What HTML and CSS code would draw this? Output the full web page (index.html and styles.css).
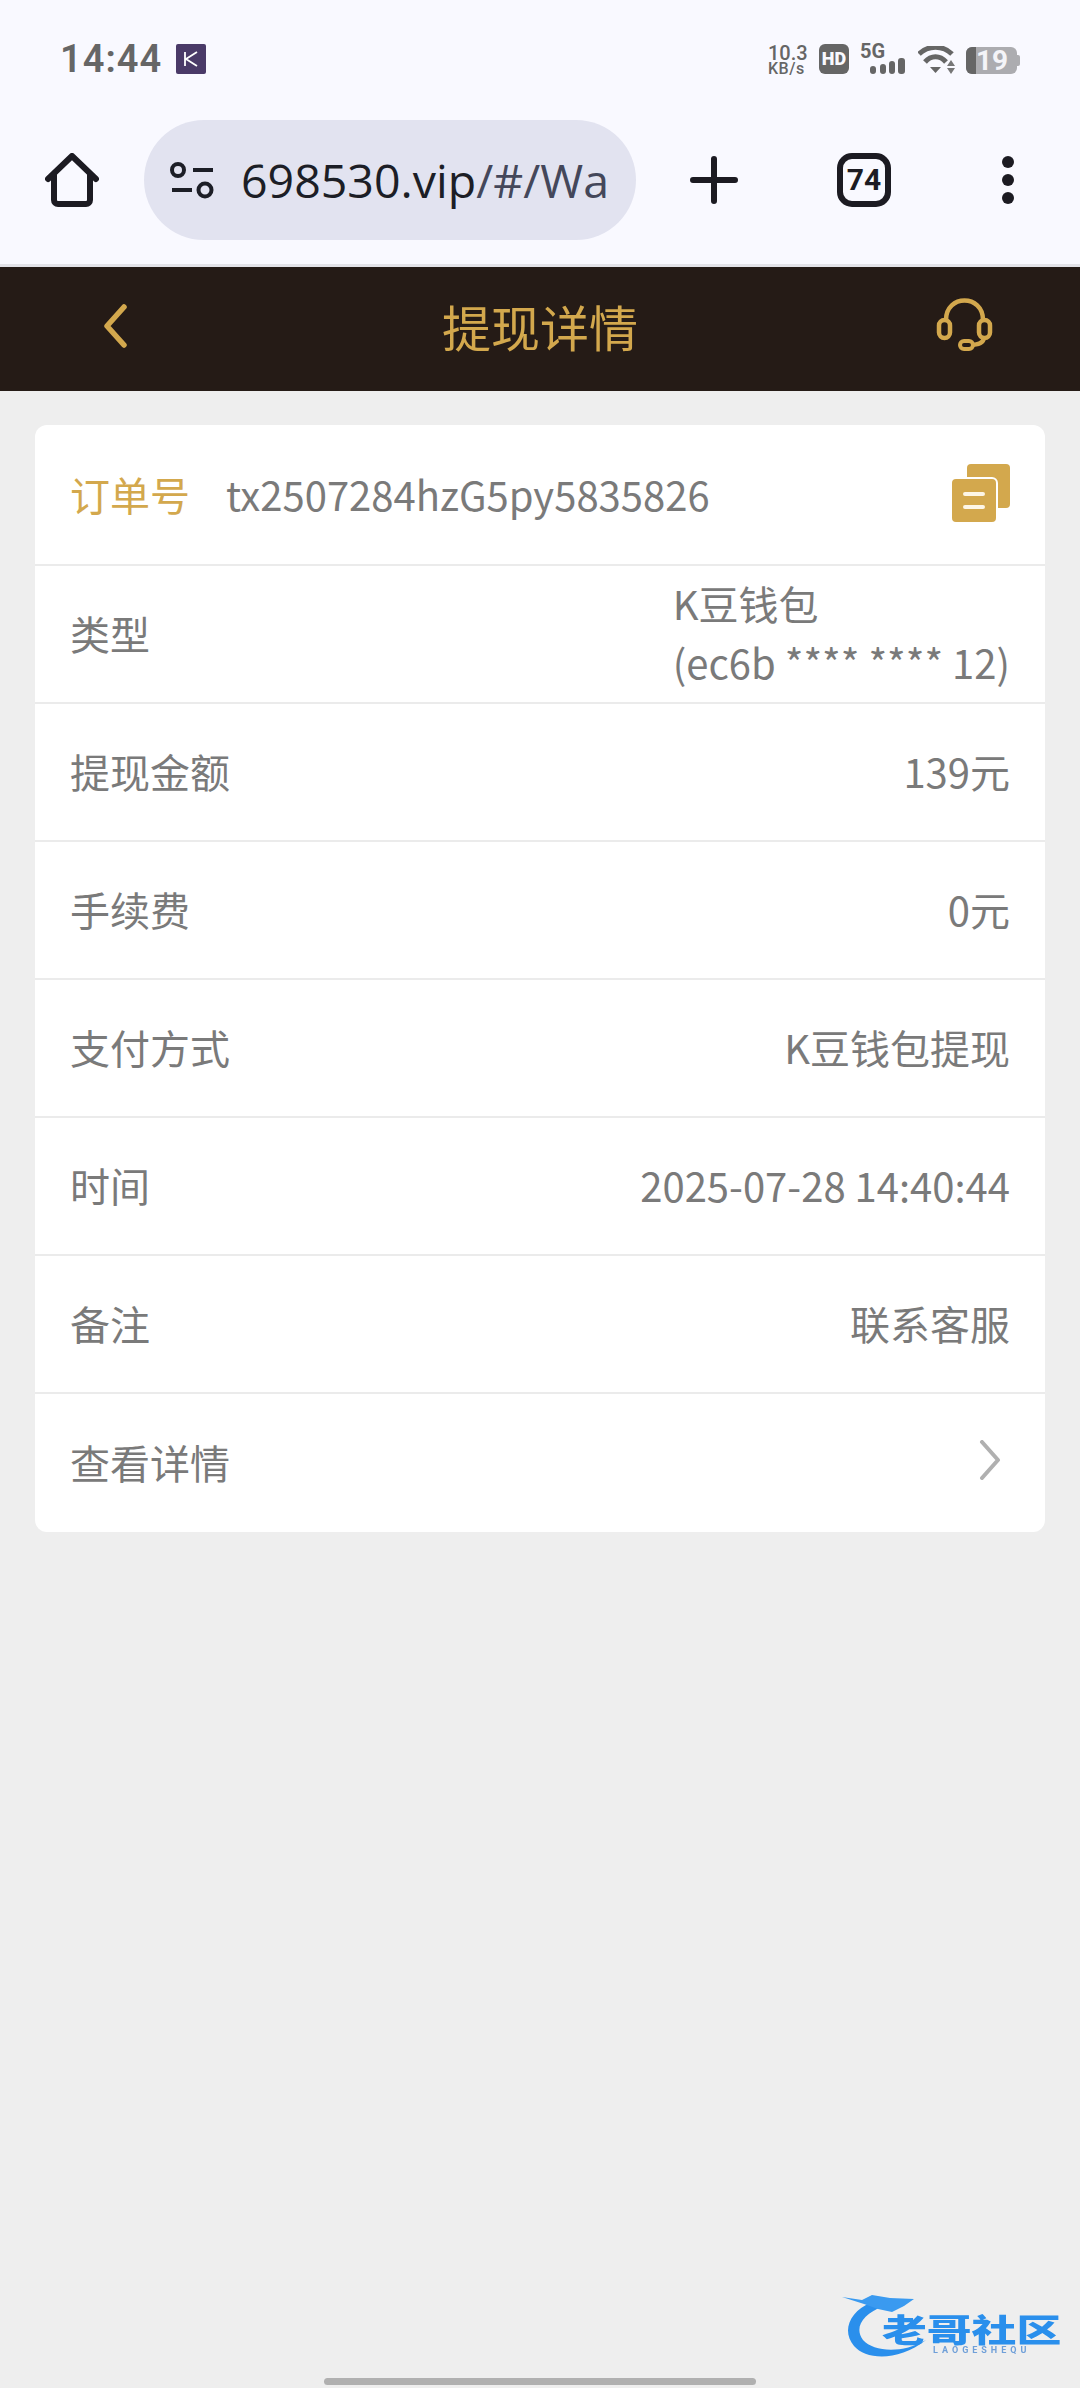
FILE: index.html
```html
<!DOCTYPE html>
<html>
<head>
    <title>提现详情</title>
    <link rel="stylesheet" href="styles.css">
    <meta charset="UTF-8">
    <meta name="viewport" content="width=device-width, initial-scale=1.0">
</head>
<body>
<div class="page">
    <div class="statusbar">
        <span class="clock">14:44</span>
        <svg class="app-icon" width="30" height="30" viewBox="0 0 30 30">
            <rect width="30" height="30" rx="2" fill="#4a3a68"/>
            <path d="M9 8v14M21 8l-11 7 11 7" fill="none" stroke="#fff" stroke-width="1.8"/>
        </svg>
        <div class="status-right">
            <div class="speed"><span class="speed-num">10.3</span><span class="speed-unit">KB/s</span></div>
            <div class="hd">HD</div>
            <div class="net">
                <span class="net-label">5G</span>
                <svg class="net-bars" width="35" height="16" viewBox="0 0 35 16">
                    <rect x="0" y="8" width="6" height="8" rx="3" fill="#666"/>
                    <rect x="10" y="6" width="6" height="10" rx="3" fill="#666"/>
                    <rect x="19" y="3" width="6" height="13" rx="3" fill="#666"/>
                    <rect x="28" y="0" width="7" height="16" rx="3" fill="#666"/>
                </svg>
            </div>
            <svg class="wifi" width="37" height="28" viewBox="0 0 37 28">
                <path d="M1 8C10 -1 25 -1 34 8" fill="none" stroke="#666" stroke-width="5"/>
                <path d="M7 16C13 9 22 9 28 16" fill="none" stroke="#666" stroke-width="5"/>
                <path d="M12 21h11l-5.500 6z" fill="#666"/>
                <path d="M33 14l4 6h-8zM29 22h8l-4 6z" fill="#777"/>
            </svg>
            <div class="battery">
                <div class="battery-fill"></div>
                <span class="battery-num">19</span>
            </div>
        </div>
    </div>

    <div class="toolbar">
        <svg class="home" width="54" height="54" viewBox="0 0 54 54">
            <path d="M3 26L27 3L51 26M9 21V47a4 4 0 0 0 4 4H41a4 4 0 0 0 4-4V21" fill="none" stroke="#1c1b22" stroke-width="6" stroke-linecap="round" stroke-linejoin="round"/>
        </svg>
        <div class="urlbar">
            <svg class="tune" width="44" height="38" viewBox="0 0 44 38">
                <circle cx="8" cy="9" r="6" fill="none" stroke="#1c1e26" stroke-width="4"/>
                <path d="M23 9H43M2 29H22" stroke="#1c1e26" stroke-width="4"/>
                <circle cx="35" cy="29" r="6.500" fill="none" stroke="#1c1e26" stroke-width="4"/>
            </svg>
            <span class="url">698530.vip<span class="url-path">/#/Wa</span></span>
        </div>
        <svg class="plus" width="48" height="48" viewBox="0 0 48 48">
            <path d="M24 3V45M3 24H45" stroke="#1c1b22" stroke-width="6" stroke-linecap="round"/>
        </svg>
        <div class="tabs">74</div>
        <svg class="more" width="12" height="48" viewBox="0 0 12 48">
            <circle cx="6" cy="6" r="6" fill="#1c1b22"/>
            <circle cx="6" cy="24" r="6" fill="#1c1b22"/>
            <circle cx="6" cy="42" r="6" fill="#1c1b22"/>
        </svg>
    </div>

    <div class="header">
        <svg class="back" width="24" height="44" viewBox="0 0 24 44">
            <path d="M20 3L3 22L20 41" fill="none" stroke="#d3a84d" stroke-width="5.500" stroke-linecap="round" stroke-linejoin="round"/>
        </svg>
        <div class="title">提现详情</div>
        <svg class="support" width="57" height="53" viewBox="0 0 57 53">
            <path d="M10 22C10 -4 47 -4 47 22" fill="none" stroke="#d3a84d" stroke-width="4.500"/>
            <rect x="3" y="22" width="11" height="18" rx="5.500" fill="none" stroke="#d3a84d" stroke-width="4.500"/>
            <rect x="43" y="22" width="11" height="18" rx="5.500" fill="none" stroke="#d3a84d" stroke-width="4.500"/>
            <path d="M48 40C47 46 41 47 34 47" fill="none" stroke="#d3a84d" stroke-width="4.500"/>
            <rect x="24" y="43" width="13" height="8" rx="4" fill="#251b16" stroke="#d3a84d" stroke-width="4"/>
        </svg>
    </div>

    <div class="content">
        <div class="card">
            <div class="row row-order">
                <span class="order-label">订单号</span>
                <span class="order-no">tx2507284hzG5py5835826</span>
                <svg class="copy" width="58" height="58" viewBox="0 0 58 58">
                    <rect x="15" y="0" width="43" height="44" rx="4" fill="#d3a84d"/>
                    <rect x="-1" y="14" width="46" height="45" rx="5" fill="#d3a84d" stroke="#fff" stroke-width="2"/>
                    <path d="M13 30H31M13 43H31" stroke="#fdf6e6" stroke-width="4" stroke-linecap="round"/>
                </svg>
            </div>
            <div class="row">
                <span>类型</span>
                <span class="value-wrap">K豆钱包<br>(ec6b **** **** 12)</span>
            </div>
            <div class="row"><span>提现金额</span><span>139元</span></div>
            <div class="row"><span>手续费</span><span>0元</span></div>
            <div class="row"><span>支付方式</span><span>K豆钱包提现</span></div>
            <div class="row"><span>时间</span><span>2025-07-28 14:40:44</span></div>
            <div class="row"><span>备注</span><span>联系客服</span></div>
            <div class="row">
                <span>查看详情</span>
                <svg class="chevron" width="22" height="40" viewBox="0 0 22 40">
                    <path d="M3 2L19 20L3 38" fill="none" stroke="#b0b0b0" stroke-width="4" stroke-linecap="round" stroke-linejoin="round"/>
                </svg>
            </div>
        </div>
    </div>

    <div class="watermark">
        <svg class="dragon" width="90" height="70" viewBox="0 0 90 70">
            <path d="M30 10C6 20 0 40 12 54C24 68 56 70 84 48C60 62 32 60 21 48C12 36 20 22 42 14z" fill="#2a8fec"/>
            <path d="M0 5L20 8L30 3L48 6L72 7L62 14L50 20L36 17L22 12z" fill="#3a9af0"/>
        </svg>
        <div class="wm-text">
            <span class="wm-name">老哥社区</span>
            <span class="wm-latin">LAOGESHEQU</span>
        </div>
    </div>
    <div class="gesture"></div>
</div>
</body>
</html>
```

FILE: styles.css
```css
* {
    box-sizing: border-box;
}

html, body {
    margin: 0;
    padding: 0;
}

body {
    font-family: "Noto Sans CJK SC", "Noto Sans", sans-serif;
    background-color: #eeeeee;
}

.page {
    position: relative;
    width: 1080px;
    height: 2388px;
    overflow: hidden;
    display: flex;
    flex-direction: column;
}

/* status bar */
.statusbar {
    height: 120px;
    padding: 44px 63px 0 60px;
    background-color: #f9f9ff;
    display: flex;
    align-items: flex-start;
    flex: none;
}

.clock {
    width: 116px;
    font-family: Roboto, sans-serif;
    font-weight: 600;
    font-size: 38px;
    line-height: 30px;
    color: #666;
    letter-spacing: 1px;
}

.status-right {
    margin-left: auto;
    display: flex;
    align-items: flex-start;
}

.speed {
    width: 38px;
    display: flex;
    flex-direction: column;
    font-family: Roboto, sans-serif;
    color: #666;
    font-weight: 500;
}

.speed-num {
    font-size: 20px;
    line-height: 18px;
}

.speed-unit {
    font-size: 16px;
    line-height: 13px;
    letter-spacing: 0.5px;
    white-space: nowrap;
}

.hd {
    margin-left: 13px;
    width: 30px;
    height: 30px;
    border-radius: 6px;
    background-color: #666;
    color: #f9f9ff;
    font-family: Roboto, sans-serif;
    font-weight: 900;
    font-size: 18px;
    line-height: 30px;
    text-align: center;
}

.net {
    margin-left: 11px;
    width: 45px;
    height: 30px;
    display: flex;
    flex-direction: column;
}

.net-label {
    font-family: Roboto, sans-serif;
    font-weight: 700;
    font-size: 20px;
    line-height: 14px;
    color: #666;
}

.net-bars {
    margin-left: 10px;
}

.wifi {
    margin-left: 13px;
    margin-top: 2px;
}

.battery {
    position: relative;
    margin-left: 11px;
    margin-top: 3px;
    width: 51px;
    height: 27px;
    border-radius: 6px;
    background-color: #acacb0;
}

/* battery nub */
.battery::after {
    content: "";
    position: absolute;
    left: 51px;
    top: 8px;
    width: 3px;
    height: 11px;
    border-radius: 0 2px 2px 0;
    background-color: #acacb0;
}

.battery-fill {
    position: absolute;
    left: 0;
    top: 0;
    bottom: 0;
    width: 10px;
    border-radius: 6px 0 0 6px;
    background-color: #666;
}

.battery-num {
    position: absolute;
    left: 10px;
    top: 0;
    width: 30px;
    text-align: center;
    font-family: Roboto, sans-serif;
    font-weight: 700;
    font-size: 28px;
    line-height: 27px;
    color: #f4f4f8;
}

/* browser toolbar */
.toolbar {
    height: 147px;
    background-color: #f9f9ff;
    border-bottom: 3px solid #e3e3e8;
    display: flex;
    align-items: flex-start;
    flex: none;
}

.home {
    margin: 33px 0 0 45px;
    flex: none;
}

.urlbar {
    margin-left: 45px;
    width: 492px;
    height: 120px;
    border-radius: 60px;
    background-color: #e2e3f0;
    display: flex;
    align-items: center;
    padding-left: 26px;
    flex: none;
}

.tune {
    flex: none;
}

.url {
    margin-left: 27px;
    white-space: nowrap;
    font-family: "Open Sans", sans-serif;
    font-size: 46.500px;
    line-height: 60px;
    color: #1c1e26;
}

.url-path {
    color: #44475a;
}

.plus {
    margin: 36px 0 0 54px;
    flex: none;
}

.tabs {
    margin: 33px 0 0 99px;
    width: 54px;
    height: 54px;
    border: 6px solid #1c1b22;
    border-radius: 15px;
    font-family: Roboto, sans-serif;
    font-weight: 700;
    font-size: 30px;
    line-height: 42px;
    text-align: center;
    color: #1c1b22;
    flex: none;
}

.more {
    margin: 36px 0 0 111px;
    flex: none;
}

/* page header */
.header {
    height: 124px;
    background-color: #251b16;
    display: grid;
    grid-template-columns: 1fr auto 1fr;
    align-items: center;
    padding: 0 87px;
    flex: none;
}

.back {
    margin-left: 17px;
    margin-top: -6px;
}

.title {
    margin-top: -6px;
    font-size: 49px;
    line-height: 60px;
    color: #d3a84d;
}

.support {
    justify-self: end;
    margin-top: -9px;
}

/* detail card */
.content {
    padding: 34px 35px 0;
    flex: 1;
}

.card {
    background-color: #fff;
    border-radius: 12px;
    overflow: hidden;
}

.row {
    height: 138px;
    padding: 0 35px 2px;
    border-bottom: 2px solid #ebebeb;
    display: flex;
    justify-content: space-between;
    align-items: center;
    font-size: 40px;
    color: #7a7a7a;
}

.row:last-child {
    border-bottom: none;
}

.row-order {
    height: 141px;
    justify-content: flex-start;
}

.order-label {
    color: #d3a84d;
}

.order-no {
    margin-left: 36px;
}

.copy {
    margin-left: auto;
    margin-top: -1px;
    overflow: visible;
}

.value-wrap {
    line-height: 59px;
}

.chevron {
    margin-right: 9px;
    margin-top: -4px;
}

/* watermark and gesture bar */
.watermark {
    position: absolute;
    left: 842px;
    top: 2292px;
    width: 222px;
    height: 70px;
    filter: blur(0.5px);
}

.dragon {
    position: absolute;
    left: 0;
    top: 0;
}

.wm-text {
    position: absolute;
    left: 40px;
    top: 20px;
    width: 180px;
    display: flex;
    flex-direction: column;
}

.wm-name {
    font-weight: 900;
    font-size: 32px;
    line-height: 33px;
    white-space: nowrap;
    color: #2a8fec;
    transform: scaleX(1.4);
    transform-origin: left center;
}

.wm-latin {
    margin-left: 51px;
    font-family: Roboto, sans-serif;
    font-weight: 700;
    font-size: 9px;
    line-height: 10px;
    letter-spacing: 4px;
    white-space: nowrap;
    color: #6f9fd8;
}

.gesture {
    position: absolute;
    left: 324px;
    top: 2378px;
    width: 432px;
    height: 7px;
    border-radius: 4px;
    background-color: #b0b0b0;
}
```
